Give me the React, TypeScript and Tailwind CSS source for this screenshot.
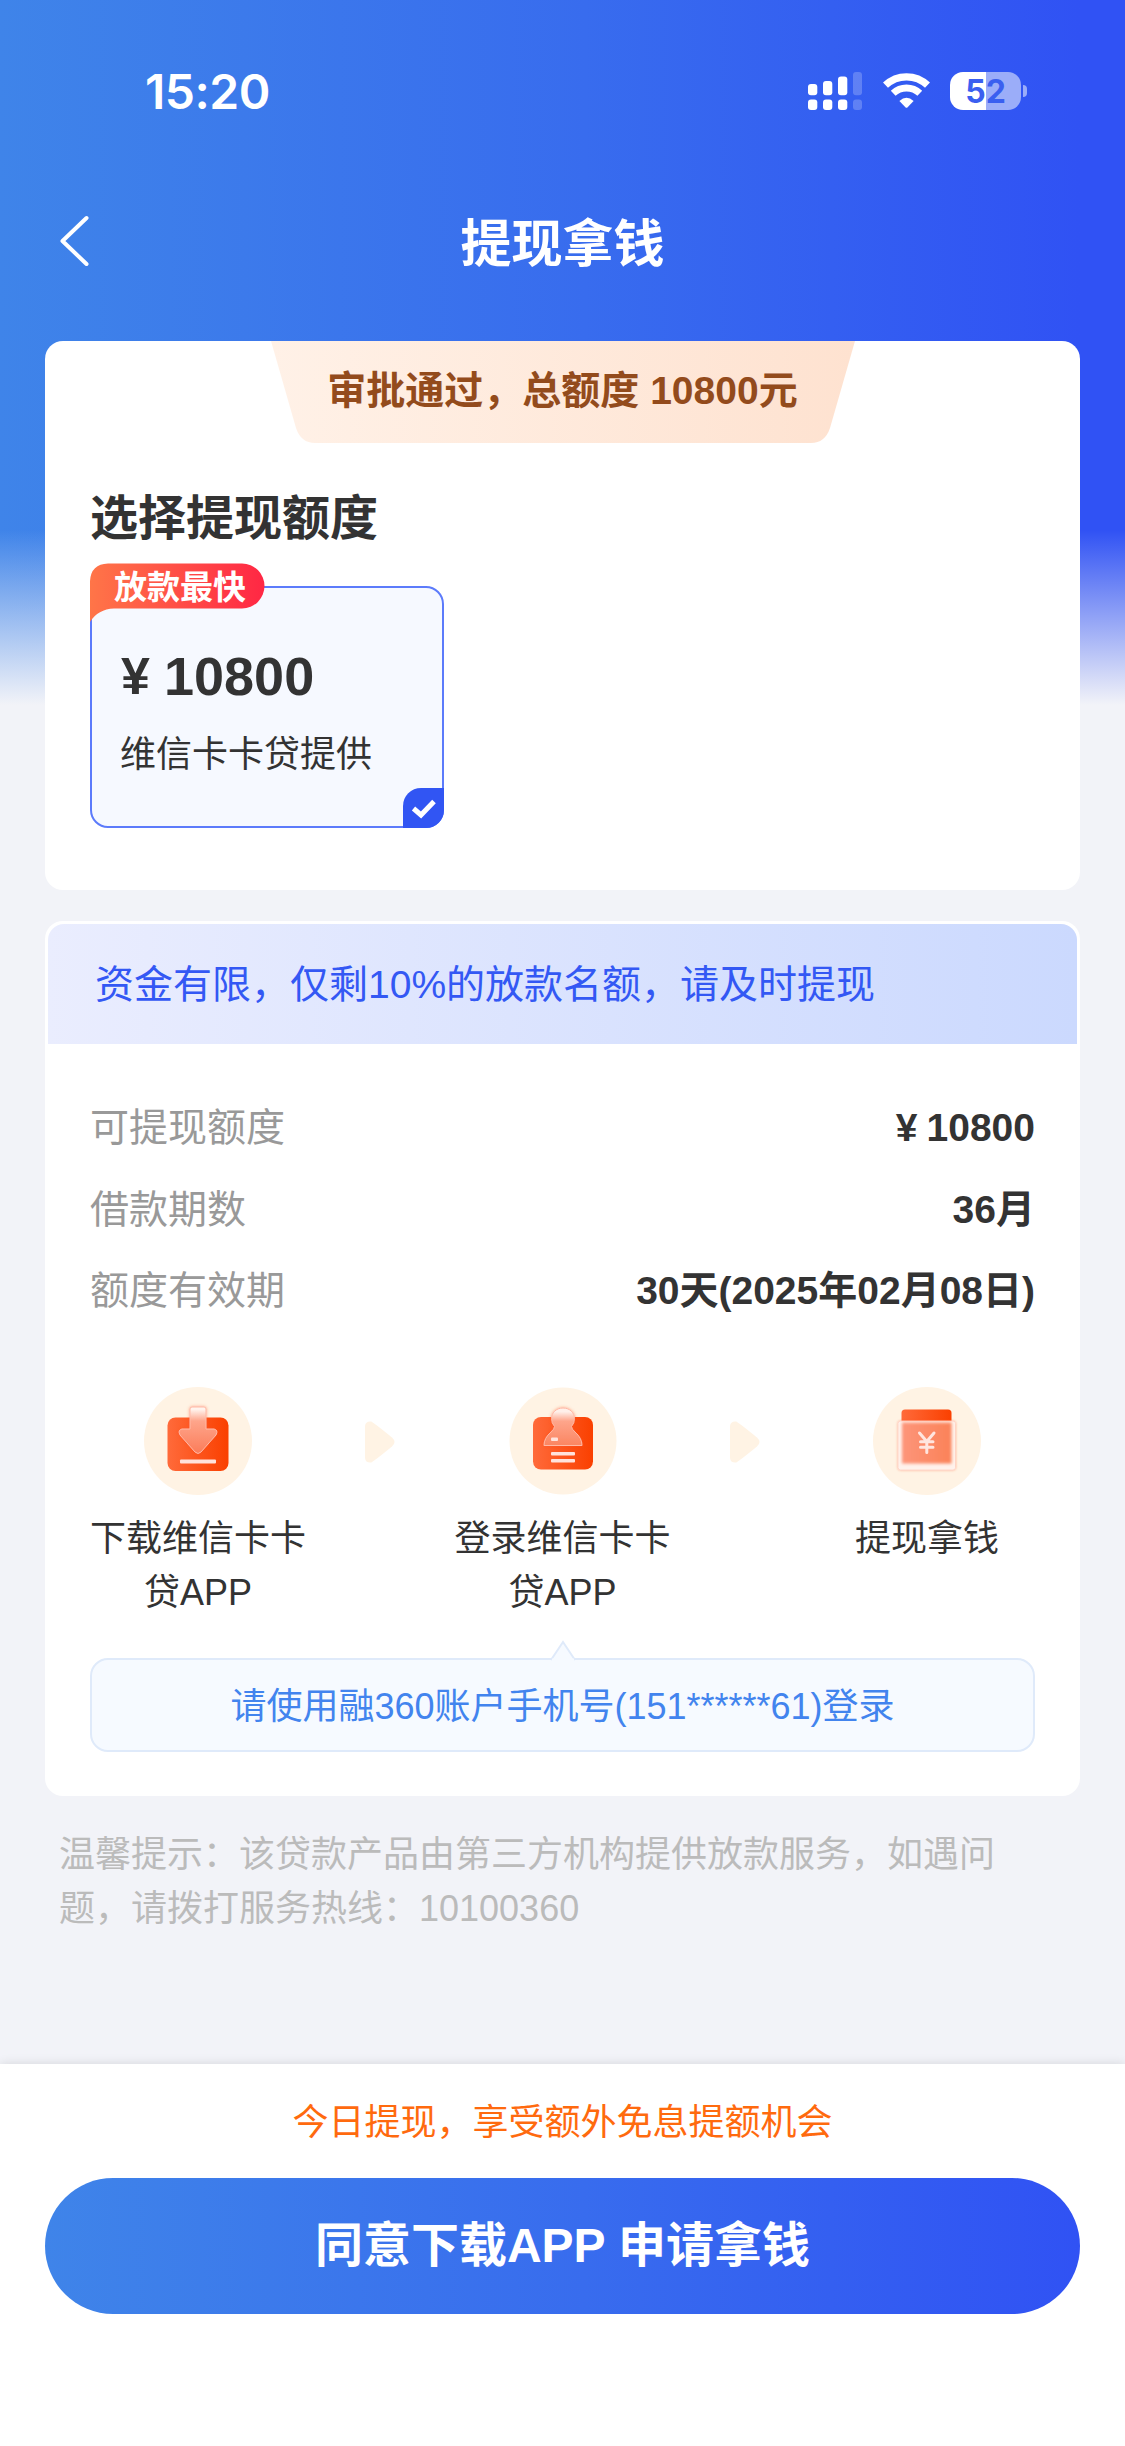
import React from 'react';

interface DetailRow {
    label: string;
    value: React.ReactNode;
}

interface Step {
    icon: React.ReactNode;
    label: string;
}

const StatusBar: React.FC = () => (
    <div className="h-[182px] pt-[62px] pl-[145px] pr-[98px] flex justify-between">
        <span className="h-[60px] leading-[60px] font-['Inter',sans-serif] text-[48px] font-semibold tracking-[-0.5px] text-white">15:20</span>
        <div className="flex items-start pt-[10px]">
            <svg className="w-[54px] h-[38px]" viewBox="0 0 54 38" fill="#fff">
                <rect x="0" y="12" width="9.3" height="11.3" rx="3" />
                <rect x="15" y="9" width="9.3" height="14.3" rx="3" />
                <rect x="30" y="4.5" width="9.3" height="18.8" rx="3" />
                <rect x="45" y="0" width="9" height="23.3" rx="3" opacity="0.22" />
                <rect x="0" y="27.5" width="9.3" height="10.5" rx="3" />
                <rect x="15" y="27.5" width="9.3" height="10.5" rx="3" />
                <rect x="30" y="27.5" width="9.3" height="10.5" rx="3" />
                <rect x="45" y="27.5" width="9" height="10.5" rx="3" opacity="0.22" />
            </svg>
            <svg className="ml-[21px] mt-[1px] w-[47px] h-[36px]" viewBox="0 0 47 36">
                <path d="M2.5 12.2 A30.5 30.5 0 0 1 44.5 12.2" fill="none" stroke="#fff" strokeWidth="7.2" />
                <path d="M10.2 20.2 A19.5 19.5 0 0 1 36.8 20.2" fill="none" stroke="#fff" strokeWidth="7" />
                <path d="M16.4 28 Q23.5 21.5 30.6 28 L24.6 34.2 Q23.5 35.2 22.4 34.2 Z" fill="#fff" />
            </svg>
            <div className="ml-[20px] w-[71px] h-[38px] rounded-[13px] bg-[linear-gradient(to_right,#fff_36.5px,#9badf9_36.5px)] text-center font-['Inter',sans-serif] text-[32px] leading-[39px] font-bold text-[#3a5ff0]">52</div>
            <div className="ml-[2px] mt-[13px] w-[4px] h-[12px] rounded-r-full bg-[#9badf9]" />
        </div>
    </div>
);

const DownloadIcon: React.FC = () => (
    <svg className="w-[108px] h-[108px]" viewBox="0 0 108 108">
        <defs>
            <linearGradient id="dlBox" x1="0" x2="1">
                <stop offset="0" stopColor="#ff6a3a" />
                <stop offset="1" stopColor="#fa4000" />
            </linearGradient>
            <linearGradient id="dlArrow" x1="0" y1="0" x2="0" y2="1">
                <stop offset="0.05" stopColor="#fff4ee" />
                <stop offset="0.3" stopColor="#fea58b" />
                <stop offset="1" stopColor="#fb7c59" />
            </linearGradient>
            <filter id="dlGlow" x="-30%" y="-30%" width="160%" height="160%">
                <feDropShadow dx="0" dy="0" stdDeviation="1.5" floodColor="#fb4a1c" floodOpacity="0.5" />
            </filter>
        </defs>
        <circle cx="54" cy="54" r="54" fill="#fff3e4" />
        <rect x="23.5" y="30.5" width="61" height="53.5" rx="8" fill="url(#dlBox)" />
        <path
            d="M48 20 H60 Q62 20 62 22 V42 H70 Q74.5 43 72 48 L57 65 Q54 68 51 65 L36 48 Q33.5 43 38 42 H46 V22 Q46 20 48 20 Z"
            fill="url(#dlArrow)"
            stroke="#ffb9a5"
            strokeWidth="1"
            filter="url(#dlGlow)"
        />
        <rect x="36" y="72.5" width="36" height="4" rx="1" fill="#ffe3dc" />
    </svg>
);

const LoginIcon: React.FC = () => (
    <svg className="w-[108px] h-[108px]" viewBox="0 0 108 108">
        <defs>
            <linearGradient id="lgBox" x1="0" x2="1">
                <stop offset="0" stopColor="#ff6a3a" />
                <stop offset="1" stopColor="#fa4000" />
            </linearGradient>
            <linearGradient id="lgUser" x1="0" y1="0" x2="0" y2="1">
                <stop offset="0.1" stopColor="#fff0ea" />
                <stop offset="0.35" stopColor="#fea58b" />
                <stop offset="1" stopColor="#fb8561" />
            </linearGradient>
            <filter id="lgGlow" x="-30%" y="-30%" width="160%" height="160%">
                <feDropShadow dx="0" dy="0" stdDeviation="1.5" floodColor="#fb4a1c" floodOpacity="0.5" />
            </filter>
        </defs>
        <circle cx="54" cy="54" r="53.5" fill="#fff3e4" />
        <rect x="24" y="30" width="60" height="52.5" rx="8" fill="url(#lgBox)" />
        <path
            d="M54 21 C61 21 65.5 26 65.5 31.5 Q65.5 36 62.5 39.5 Q62.5 42 66 45 Q73 51 73 58.5 H35 Q35 51 42 45 Q45.500 42 45.5 39.5 Q42.5 36 42.5 31.5 C42.5 26 47 21 54 21 Z"
            fill="url(#lgUser)"
            stroke="#ffb9a5"
            strokeWidth="1"
            filter="url(#lgGlow)"
        />
        <rect x="42" y="50.5" width="7" height="3.5" rx="1" fill="#ffe3dc" />
        <rect x="42" y="65" width="24" height="3.5" rx="1" fill="#ffe3dc" />
        <rect x="42" y="72" width="24" height="3.5" rx="1" fill="#ffe3dc" />
    </svg>
);

const WithdrawIcon: React.FC = () => (
    <svg className="w-[108px] h-[108px]" viewBox="0 0 108 108">
        <defs>
            <linearGradient id="wdBox" x1="0" x2="1">
                <stop offset="0" stopColor="#ff6a3a" />
                <stop offset="1" stopColor="#fa4000" />
            </linearGradient>
            <linearGradient id="wdInner" x1="0" x2="1">
                <stop offset="0" stopColor="#fd957a" />
                <stop offset="1" stopColor="#fb8258" />
            </linearGradient>
            <filter id="wdGlow" x="-30%" y="-30%" width="160%" height="160%">
                <feDropShadow dx="0" dy="0" stdDeviation="1.2" floodColor="#fb4a1c" floodOpacity="0.4" />
            </filter>
            <filter id="wdSoft" x="-20%" y="-20%" width="140%" height="140%">
                <feGaussianBlur stdDeviation="1.6" />
            </filter>
        </defs>
        <circle cx="54" cy="54" r="54" fill="#fff3e4" />
        <rect x="28.5" y="22.5" width="50" height="30" rx="3.5" fill="url(#wdBox)" />
        <rect x="25" y="34" width="57.5" height="49" rx="2.5" fill="#fff2ec" stroke="#ffd0c2" strokeWidth="0.8" filter="url(#wdGlow)" />
        <rect x="29" y="35.5" width="49.5" height="41" fill="url(#wdInner)" filter="url(#wdSoft)" />
        <path d="M46.5 46 L53.8 54.5 L61 46 M53.8 54.5 V65.5 M47.5 54.8 H60 M47.5 60.2 H60" fill="none" stroke="#ffe6df" strokeWidth="3" strokeLinecap="round" />
    </svg>
);

const StepArrow: React.FC = () => (
    <svg className="mt-[34px] w-[30px] h-[42px]" viewBox="0 0 30 42" fill="#fff3e4">
        <path d="M0 5 Q0.5 0 6 0.5 Q8 1 27 16.5 Q32 21 27 25.5 Q8 41 6 41.5 Q0.5 42 0 37 Z" />
    </svg>
);

const details: DetailRow[] = [
    { label: '可提现额度', value: <><span className="mr-[9px]">¥</span>10800</> },
    { label: '借款期数', value: '36月' },
    { label: '额度有效期', value: '30天(2025年02月08日)' },
];

const steps: Step[] = [
    { icon: <DownloadIcon />, label: '下载维信卡卡贷APP' },
    { icon: <LoginIcon />, label: '登录维信卡卡贷APP' },
    { icon: <WithdrawIcon />, label: '提现拿钱' },
];

const QuotaCard: React.FC = () => (
    <section className="h-[549px] rounded-[18px] bg-white overflow-hidden">
        <div className="relative mx-auto w-[584px] h-[102px]">
            <svg className="absolute inset-0 w-[584px] h-[102px]" viewBox="0 0 584 102">
                <defs>
                    <linearGradient id="ribbon" x1="0" x2="1">
                        <stop offset="0" stopColor="#fff1e7" />
                        <stop offset="1" stopColor="#fee2d0" />
                    </linearGradient>
                </defs>
                <path d="M0 0 H584 L559 87 Q554 102 540 102 H44 Q30 102 25 87 Z" fill="url(#ribbon)" />
            </svg>
            <p className="relative text-center text-[39px] leading-[100px] font-bold text-[#934b1c]">审批通过，总额度 10800元</p>
        </div>
        <h2 className="mt-[46px] ml-[45px] text-[48px] leading-[60px] font-bold text-[#333]">选择提现额度</h2>
        <div className="relative mt-[37px] ml-[45px] w-[354px] h-[242px] rounded-[18px] border-2 border-[#5c7bfb] bg-[#f6f9ff] pl-[29px] pt-[58px]">
            <svg className="absolute left-[-2px] top-[-25px] w-[175px] h-[59px]" viewBox="0 0 175 59">
                <defs>
                    <linearGradient id="fast" x1="0" x2="1">
                        <stop offset="0" stopColor="#ff7548" />
                        <stop offset="1" stopColor="#ff2744" />
                    </linearGradient>
                </defs>
                <path d="M0 18 Q1 1 18 0.5 H152 A22.5 22.5 0 0 1 152 45.5 H24 Q8 46 0 59 Z" fill="url(#fast)" />
            </svg>
            <span className="absolute left-[22px] top-[-23px] text-[33px] leading-[46px] font-bold text-white">放款最快</span>
            <div className="flex text-[54px] leading-[60px] font-bold text-[#333]">
                <span className="w-[43px] text-[52px]">¥</span>
                <span>10800</span>
            </div>
            <p className="mt-[22px] ml-[-1px] text-[36px] leading-[54px] text-[#333]">维信卡卡贷提供</p>
            <div className="absolute right-[-2px] bottom-[-2px] w-[41px] h-[40px] rounded-tl-[18px] rounded-br-[18px] bg-[#3155f3]">
                <svg className="w-[41px] h-[40px]" viewBox="0 0 41 40">
                    <path d="M10.5 20.5 L18 27 L31 13.5" fill="none" stroke="#fff" strokeWidth="5" />
                </svg>
            </div>
        </div>
    </section>
);

const DetailCard: React.FC = () => (
    <section className="mt-[31px] h-[875px] rounded-[18px] bg-white p-[3px]">
        <div className="h-[120px] rounded-t-[16px] bg-linear-to-r from-[#eaedfe] to-[#cbd9fe] pl-[47px] text-[39px] leading-[122px] text-[#3358f4]">
            资金有限，仅剩10%的放款名额，请及时提现
        </div>
        <div className="px-[42px]">
            <div className="pt-[43px]">
                {details.map(row => (
                    <div key={row.label} className="flex justify-between h-[81.5px] text-[39px] leading-[81px]">
                        <span className="text-[#999]">{row.label}</span>
                        <span className="font-bold text-[#333]">{row.value}</span>
                    </div>
                ))}
            </div>
            <div className="mt-[55px] flex justify-between">
                {steps.map((step, i) => (
                    <React.Fragment key={step.label}>
                        {i > 0 && <StepArrow />}
                        <div className="w-[216px] flex flex-col items-center">
                            {step.icon}
                            <p className="mt-[17px] w-[216px] break-all text-center text-[36px] leading-[54px] text-[#333]">{step.label}</p>
                        </div>
                    </React.Fragment>
                ))}
            </div>
            <div className="relative mt-[38px] h-[94px] rounded-[18px] border-2 border-[#dfeafa] bg-[#f6faff] text-center text-[36px] leading-[93px] text-[#4284ee]">
                <svg className="absolute left-[458px] top-[-20px] w-[26px] h-[21px]" viewBox="0 0 26 21">
                    <path d="M1 20 L13 2 L25 20" fill="#f6faff" stroke="#dfeafa" strokeWidth="2" />
                    <rect x="2" y="18.5" width="22" height="2.5" fill="#f6faff" />
                </svg>
                请使用融360账户手机号(151******61)登录
            </div>
        </div>
    </section>
);

export default function App() {
    return (
        <div className="w-[1125px] h-[2446px] flex flex-col overflow-hidden font-['Liberation_Sans','Noto_Sans_CJK_SC',sans-serif] bg-[#f2f3f8] bg-[linear-gradient(to_bottom,transparent_530px,#f2f3f8_705px),linear-gradient(to_right,#3f84e9,#386cee_52%,#3052f4_96%)]">
            <StatusBar />
            <header className="h-[159px] grid grid-cols-3 pt-[30px]">
                <svg className="ml-[58px] w-[33px] h-[56px]" viewBox="0 0 33 56">
                    <path d="M28.5 6 L4.5 29 L28.5 52" fill="none" stroke="#fff" strokeWidth="4" strokeLinecap="round" strokeLinejoin="round" />
                </svg>
                <h1 className="text-center text-[51px] leading-[65px] font-bold text-white">提现拿钱</h1>
            </header>
            <main className="px-[45px] flex-1">
                <QuotaCard />
                <DetailCard />
                <p className="mt-[32px] px-[14px] text-[36px] leading-[54px] text-[#bbb]">
                    温馨提示：该贷款产品由第三方机构提供放款服务，如遇问题，请拨打服务热线：10100360
                </p>
            </main>
            <footer className="h-[382px] px-[45px] pt-[31px] bg-white shadow-[0_0_10px_rgba(0,0,0,0.12)]">
                <p className="text-center text-[36px] leading-[56px] text-[#ff6a0e]">今日提现，享受额外免息提额机会</p>
                <button className="mt-[27px] w-full h-[136px] rounded-full bg-[linear-gradient(to_right,#3f84e9,#386cee_52%,#3052f4)] text-[48px] leading-[134px] font-bold text-white">
                    同意下载APP 申请拿钱
                </button>
            </footer>
        </div>
    );
}
